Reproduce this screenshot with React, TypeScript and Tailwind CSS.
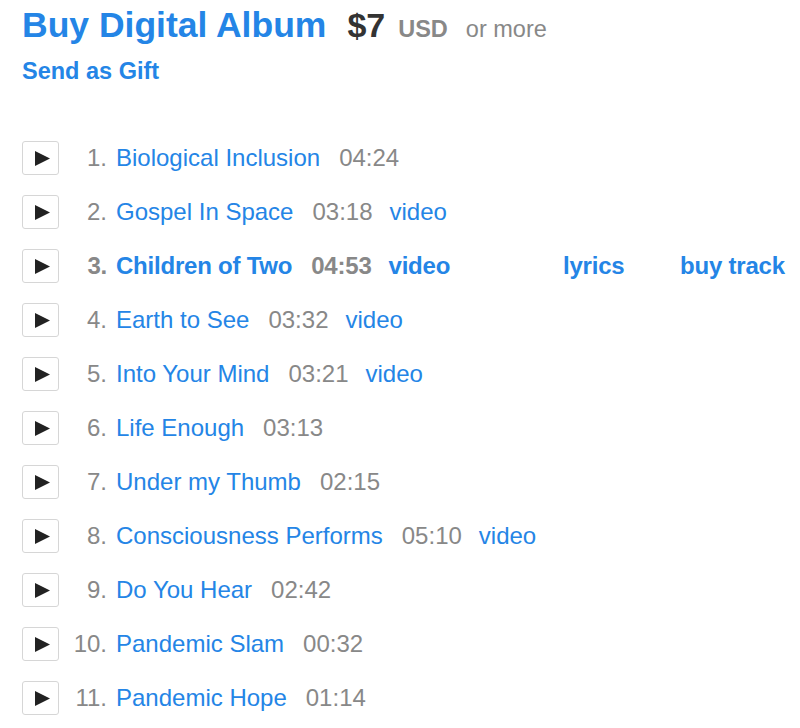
import React from "react";

type Track = { n: number; title: string; time: string; video?: boolean; current?: boolean };

const tracks: Track[] = [
  { n: 1, title: "Biological Inclusion", time: "04:24" },
  { n: 2, title: "Gospel In Space", time: "03:18", video: true },
  { n: 3, title: "Children of Two", time: "04:53", video: true, current: true },
  { n: 4, title: "Earth to See", time: "03:32", video: true },
  { n: 5, title: "Into Your Mind", time: "03:21", video: true },
  { n: 6, title: "Life Enough", time: "03:13" },
  { n: 7, title: "Under my Thumb", time: "02:15" },
  { n: 8, title: "Consciousness Performs", time: "05:10", video: true },
  { n: 9, title: "Do You Hear", time: "02:42" },
  { n: 10, title: "Pandemic Slam", time: "00:32" },
  { n: 11, title: "Pandemic Hope", time: "01:14" },
];

function PlayButton() {
  return (
    <div className="w-[37px] h-[34px] shrink-0 border border-[#d6d6d6] rounded-[3px] bg-white flex items-center justify-center">
      <svg width="15" height="15" viewBox="0 0 15 15" className="ml-[3px]">
        <polygon points="0,0 15,7.5 0,15" fill="#222222" />
      </svg>
    </div>
  );
}

export default function App() {
  return (
    <div
      className="w-[800px] h-[728px] bg-white overflow-hidden pl-[22px]"
      style={{ fontFamily: '"Liberation Sans", Arial, Helvetica, sans-serif' }}
    >
      <div className="pt-[5px] h-[45px] flex items-baseline leading-[40px] whitespace-nowrap">
        <span className="text-[35.5px] font-bold text-[#2485e6]">Buy Digital Album</span>
        <span className="ml-[21px] text-[34px] font-bold text-[#333333]">$7</span>
        <span className="ml-[13px] text-[23.5px] font-bold text-[#888888]">USD</span>
        <span className="ml-[18px] text-[23.5px] text-[#888888]">or more</span>
      </div>
      <div className="mt-[13px] h-[27px] leading-[27px] text-[23.5px] font-bold text-[#2485e6]">
        Send as Gift
      </div>
      <div className="mt-[46px] flex flex-col">
        {tracks.map((t) => (
          <div key={t.n} className="h-[54px] flex items-center whitespace-nowrap text-[24px]">
            <PlayButton />
            <div
              className={
                "w-[48px] text-right text-[#888888] " + (t.current ? "font-bold tracking-[-0.2px]" : "")
              }
            >
              {t.n}.
            </div>
            <div
              className={
                "ml-[9px] w-[447px] flex items-center " + (t.current ? "font-bold tracking-[-0.22px]" : "")
              }
            >
              <span className="text-[#2485e6]">{t.title}</span>
              <span className="ml-[19px] text-[#888888]">{t.time}</span>
              {t.video && <span className="ml-[17px] text-[#2485e6]">video</span>}
            </div>
            {t.current && (
              <>
                <div className="w-[117px] font-bold tracking-[-0.2px] text-[#2485e6]">lyrics</div>
                <div className="font-bold tracking-[-0.2px] text-[#2485e6]">buy track</div>
              </>
            )}
          </div>
        ))}
      </div>
    </div>
  );
}
